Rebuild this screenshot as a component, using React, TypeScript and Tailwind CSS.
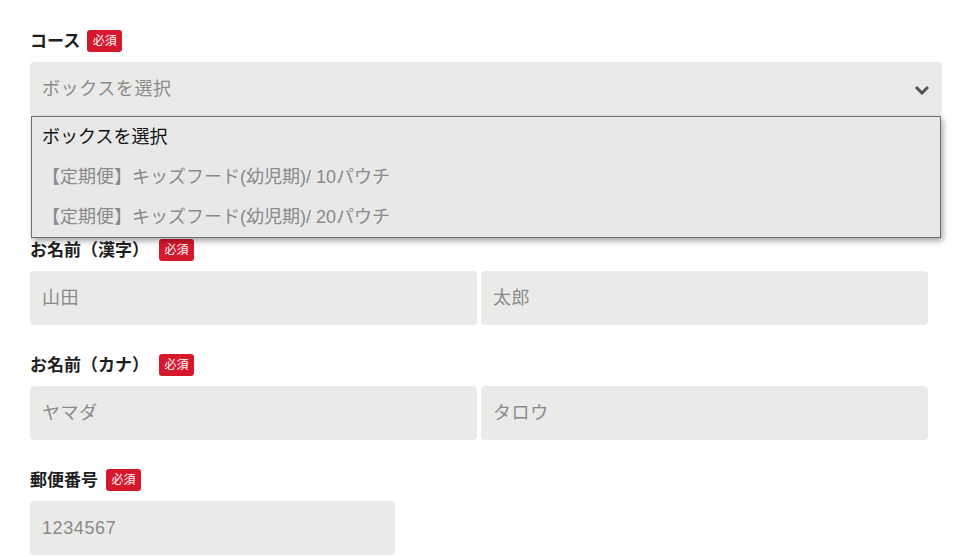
const font = { fontFamily: '"Liberation Sans", "Noto Sans CJK JP", sans-serif' };

const courseOptions = [
  'ボックスを選択',
  '【定期便】キッズフード(幼児期)/ 10パウチ',
  '【定期便】キッズフード(幼児期)/ 20パウチ',
];

function Required({ className = '' }: { className?: string }) {
  return (
    <span
      className={`flex h-[22px] w-[35px] items-center justify-center rounded-[3px] bg-[#d6182c] text-[12px] text-white ${className}`}
    >
      必須
    </span>
  );
}

function FieldLabel({ text, gap }: { text: string; gap: string }) {
  return (
    <div className="flex h-[22px] items-center">
      <span className="text-[17px] font-bold leading-none text-[#1e1e1e]">{text}</span>
      <Required className={gap} />
    </div>
  );
}

function TextBox({ placeholder, className = '' }: { placeholder: string; className?: string }) {
  return (
    <div
      className={`flex h-[54px] items-center rounded-[4px] bg-[#eaeae9] px-3 text-[18px] tracking-[0.6px] text-[#8a8a8a] ${className}`}
    >
      {placeholder}
    </div>
  );
}

export default function App() {
  return (
    <div className="min-h-screen bg-white px-[30px] pt-[30px]" style={font}>
      {/* コース */}
      <FieldLabel text="コース" gap="ml-[7px]" />
      <div className="relative mt-[10px] w-[912px]">
        <div className="flex h-[54px] items-center justify-between rounded-[4px] bg-[#eaeae9] pl-3 pr-[12px] text-[18px] tracking-[0.6px] text-[#8a8a8a]">
          <span>ボックスを選択</span>
          <svg width="16" height="10" viewBox="0 0 16 10" className="mt-[2px]">
            <polyline points="2,2 8,8 14,2" fill="none" stroke="#555" strokeWidth="3" />
          </svg>
        </div>
        <ul className="absolute left-[1px] top-full z-10 w-[910px] border border-[#6e6e6e] bg-[#e8e8e8] shadow-[2px_3px_6px_rgba(0,0,0,0.35)]">
          {courseOptions.map((opt, i) => (
            <li
              key={opt}
              className={`flex h-10 items-center px-[10px] text-[18px] ${i === 0 ? 'text-[#111]' : 'text-[#8a8a8a]'}`}
            >
              {opt}
            </li>
          ))}
        </ul>
      </div>

      {/* お名前（漢字） */}
      <div className="mt-[123px]">
        <FieldLabel text="お名前（漢字）" gap="ml-[10px]" />
        <div className="mt-[10px] flex w-[898px] gap-1">
          <TextBox placeholder="山田" className="flex-1" />
          <TextBox placeholder="太郎" className="flex-1" />
        </div>
      </div>

      {/* お名前（カナ） */}
      <div className="mt-[29px]">
        <FieldLabel text="お名前（カナ）" gap="ml-[10px]" />
        <div className="mt-[10px] flex w-[898px] gap-1">
          <TextBox placeholder="ヤマダ" className="flex-1" />
          <TextBox placeholder="タロウ" className="flex-1" />
        </div>
      </div>

      {/* 郵便番号 */}
      <div className="mt-[29px]">
        <FieldLabel text="郵便番号" gap="ml-[8px]" />
        <TextBox placeholder="1234567" className="mt-[10px] w-[365px]" />
      </div>
    </div>
  );
}
